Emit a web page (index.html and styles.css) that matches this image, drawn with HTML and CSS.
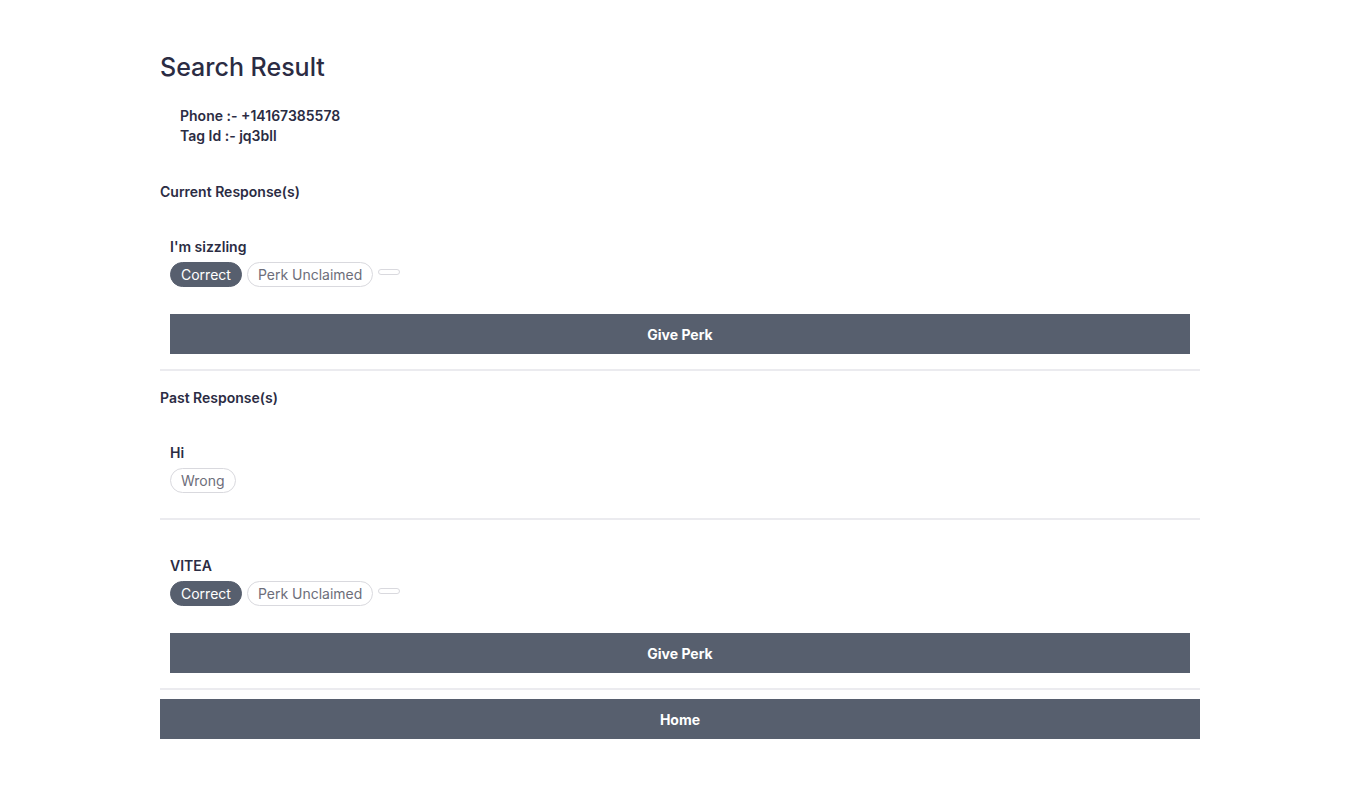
FILE: index.html
```html
<!DOCTYPE html>
<html lang="en">
<head>
<meta charset="utf-8">
<title>Search Result</title>
<link rel="stylesheet" href="styles.css">
</head>
<body>
<main class="container">
  <h1 class="title">Search Result</h1>
  <div class="info">
    <div>Phone :- +14167385578</div>
    <div>Tag Id :- jq3bll</div>
  </div>

  <section class="section">
    <h2 class="section-heading">Current Response(s)</h2>
    <div class="response">
      <div class="response-text">I'm sizzling</div>
      <div class="pills">
        <span class="pill pill-dark">Correct</span>
        <span class="pill pill-outline">Perk Unclaimed</span>
        <span class="pill pill-empty"></span>
      </div>
      <button class="btn btn-block">Give Perk</button>
    </div>
  </section>

  <section class="section">
    <h2 class="section-heading">Past Response(s)</h2>
    <div class="response">
      <div class="response-text">Hi</div>
      <div class="pills">
        <span class="pill pill-outline">Wrong</span>
      </div>
    </div>
    <div class="response">
      <div class="response-text">VITEA</div>
      <div class="pills">
        <span class="pill pill-dark">Correct</span>
        <span class="pill pill-outline">Perk Unclaimed</span>
        <span class="pill pill-empty"></span>
      </div>
      <button class="btn btn-block">Give Perk</button>
    </div>
  </section>

  <button class="btn btn-home">Home</button>
</main>
</body>
</html>
```

FILE: styles.css
```css
* { box-sizing: border-box; }

body {
  margin: 0;
  font-family: Inter, "Noto Sans", Arial, sans-serif;
  color: #2b2c43;
  background: #ffffff;
}

.container {
  max-width: 1040px;
  margin: 0 auto;
  padding-top: 53px;
  padding-bottom: 40px;
}

.title {
  margin: 0;
  font-size: 25px;
  line-height: 29px;
  font-weight: 500;
}

.info {
  margin-top: 24px;
  padding-left: 20px;
  font-size: 14px;
  line-height: 20px;
  font-weight: 600;
}

.section:first-of-type {
  margin-top: 36px;
}

.section-heading {
  margin: 0;
  font-size: 14px;
  line-height: 20px;
  font-weight: 600;
}

.section + .section .section-heading {
  margin-top: 17px;
}

.response {
  padding: 35px 10px 15px;
  border-bottom: 2px solid #ebebef;
}

.response + .response {
  padding-top: 36px;
}

.response-text {
  font-size: 14px;
  line-height: 20px;
  font-weight: 600;
}

.pills {
  display: flex;
  align-items: flex-start;
  gap: 5px;
  margin: 5px 0 10px;
}

.pill {
  display: inline-block;
  border-radius: 999px;
  border: 1px solid #d9d9de;
  padding: 3px 10px;
  font-size: 14px;
  line-height: 17px;
  font-weight: 400;
}

.pill-dark {
  background: #575f6e;
  border-color: #575f6e;
  color: #ffffff;
}

.pill-outline {
  background: #ffffff;
  color: #6d6e7a;
}

.pill-empty {
  padding: 2px 10px;
  margin-top: 7px;
}

.btn {
  display: block;
  width: 100%;
  height: 40px;
  border: none;
  background: #575f6e;
  color: #ffffff;
  font-family: Inter, "Noto Sans", Arial, sans-serif;
  font-size: 14px;
  font-weight: 700;
  cursor: pointer;
}

.btn-block {
  margin-top: 27px;
}

.btn-home {
  margin-top: 9px;
}
```
